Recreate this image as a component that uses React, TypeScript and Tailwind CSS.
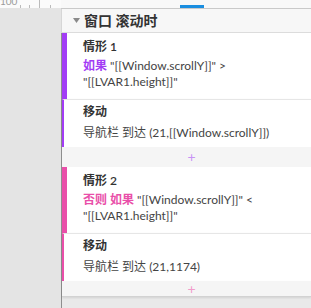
const font = { fontFamily: '"Lato", "Noto Sans CJK SC", "Noto Sans", sans-serif' };

type CaseProps = {
  title: string;
  keyword: string;
  op: string;
  target: string;
  barClass: string;
  thinClass: string;
  kwClass: string;
  plusClass: string;
  last?: boolean;
};

function CaseBlock({ title, keyword, op, target, barClass, thinClass, kwClass, plusClass, last }: CaseProps) {
  return (
    <div>
      <div className={`bg-white border-l-[5px] ${barClass} pl-[16px] pt-[5px] pb-[8px] h-[66px]`}>
        <div className="text-[12px] leading-[18px] font-semibold text-[#333]">{title}</div>
        <div className="mt-[2px] text-[12px] leading-[16px] text-[#444]">
          <span className={`font-bold ${kwClass}`}>{keyword}</span> "[[Window.scrollY]]" {op}
          <br />
          "[[LVAR1.height]]"
        </div>
      </div>
      <div
        className={`bg-white border-l-2 ${thinClass} border-t border-t-[#e6e6e6] pl-[19px] pt-[3px] h-[48px] shadow-[0_1px_2px_rgba(0,0,0,0.12)]`}
      >
        <div className="text-[12px] leading-[18px] font-semibold text-[#333]">移动</div>
        <div className="mt-[4px] text-[12px] leading-[16px] text-[#444]">导航栏 到达 {target}</div>
      </div>
      <div
        className={`flex items-center justify-center pl-[10px] bg-[#f5f5f5] ${last ? "h-[16px] border-b border-[#d2d2d2] shadow-[0_1px_2px_rgba(0,0,0,0.1)]" : "h-[20px]"}`}
      >
        <span className={`text-[14px] leading-none ${plusClass}`}>+</span>
      </div>
    </div>
  );
}

export default function App() {
  return (
    <div className="w-[311px] h-[308px] overflow-hidden flex flex-col bg-[#e6e6e6]" style={font}>
      {/* top strip: ruler + tab bar */}
      <div className="flex h-[8px] shrink-0">
        <div className="w-[61px] bg-[#fbfbfb] relative overflow-hidden">
          <span className="absolute left-0 top-[-4px] text-[10px] leading-[10px] text-[#9a9a9a]">100</span>
          <div className="absolute left-[20px] bottom-0 w-px h-[3px] bg-[#bbb]" />
          <div className="absolute left-[29px] bottom-0 w-px h-[3px] bg-[#bbb]" />
          <div className="absolute left-[39px] top-0 w-px h-[8px] bg-[#bbb]" />
          <div className="absolute left-[50px] bottom-0 w-px h-[3px] bg-[#bbb]" />
        </div>
        <div className="flex-1 bg-[#f8f8f8] relative">
          <div className="absolute left-[119px] bottom-0 w-[24px] h-[3px] bg-[#1a8ee0]" />
        </div>
      </div>

      <div className="flex flex-1">
        <div className="w-[61px] bg-[#e4e4e4]" />
        <div className="flex-1 flex flex-col bg-[#e9e9e9] border-t border-[#c9c9c9]">
          <div className="h-[24px] shrink-0 flex items-center bg-[#f7f7f7] border-b border-[#dcdcdc] border-l border-l-[#d6d6d6] pl-[11px]">
            <svg width="7" height="5" viewBox="0 0 7 5" className="mr-[4px]">
              <path d="M0 0 L7 0 L3.5 5 Z" fill="#8a8a8a" />
            </svg>
            <span className="text-[14px] font-bold text-[#333] leading-none">窗口 滚动时</span>
          </div>
          <div className="border-l border-[#8e8e8e] flex-1">
            <CaseBlock
              title="情形 1"
              keyword="如果"
              op=">"
              target="(21,[[Window.scrollY]])"
              barClass="border-[#a23cf5]"
              thinClass="border-l-[#a23cf5]"
              kwClass="text-[#a23cf5]"
              plusClass="text-[#c893f5]"
            />
            <CaseBlock
              title="情形 2"
              keyword="否则 如果"
              op="<"
              target="(21,1174)"
              barClass="border-[#e94fa9]"
              thinClass="border-l-[#e94fa9]"
              kwClass="text-[#e94fa9]"
              plusClass="text-[#f29ccb]"
              last
            />
          </div>
        </div>
      </div>
    </div>
  );
}
